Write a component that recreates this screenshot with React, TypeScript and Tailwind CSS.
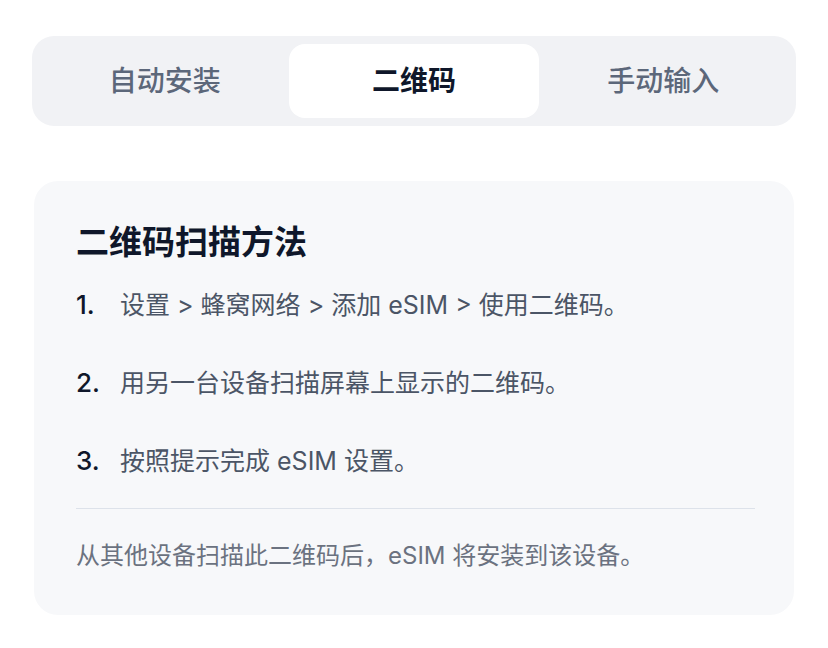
import React from "react";

const font = { fontFamily: 'Inter, "Noto Sans CJK SC", sans-serif' };

export default function App() {
  const tabs = ["自动安装", "二维码", "手动输入"];
  const steps = [
    "设置 > 蜂窝网络 > 添加 eSIM > 使用二维码。",
    "用另一台设备扫描屏幕上显示的二维码。",
    "按照提示完成 eSIM 设置。",
  ];
  return (
    <div className="w-[828px] h-[648px] bg-white" style={font}>
      <div className="pt-[36px] px-[32px]">
        <div className="w-[764px] h-[90px] rounded-[22px] bg-[#f1f2f5] p-[8px] grid grid-cols-3">
          {tabs.map((t, i) => (
            <div
              key={t}
              className={
                i === 1
                  ? "flex items-center justify-center rounded-[16px] bg-white text-[28px] font-semibold text-[#0f172a]"
                  : "flex items-center justify-center text-[28px] font-medium text-[#5c677a]"
              }
            >
              {t}
            </div>
          ))}
        </div>
      </div>
      <div className="mt-[55px] ml-[34px] w-[760px] rounded-[24px] bg-[#f7f8fa] pt-[41px] pb-[43px] px-[42px]">
        <div className="text-[33px] leading-[40px] font-bold text-[#0f172a]">二维码扫描方法</div>
        <div className="mt-[27px] flex flex-col gap-[46px]">
          {steps.map((s, i) => (
            <div key={i} className="flex items-center leading-[32px]">
              <span className="w-[44px] text-[26px] font-medium text-[#0f172a]">{i + 1}.</span>
              <span className="text-[25px] text-[#4b5566]">{s}</span>
            </div>
          ))}
        </div>
        <div className="mt-[31px] h-px w-[679px] bg-[#dde2ea]" />
        <div className="mt-[31px] text-[24px] leading-[32px] text-[#6b7280]">
          从其他设备扫描此二维码后，eSIM 将安装到该设备。
        </div>
      </div>
    </div>
  );
}
